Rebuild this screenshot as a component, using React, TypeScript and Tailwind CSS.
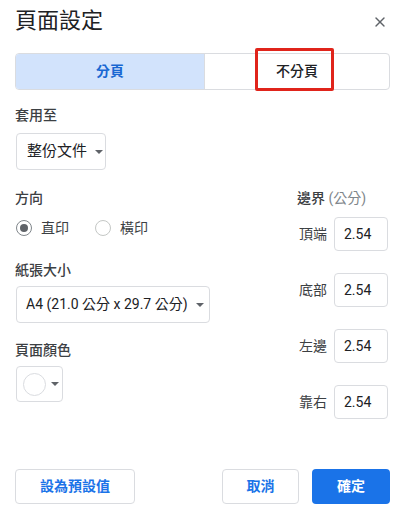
import { X } from 'lucide-react'

const font = { fontFamily: '"Roboto", "Noto Sans CJK TC", "Noto Sans", sans-serif' }

function Caret() {
  return <span className="inline-block w-0 h-0 border-l-[4px] border-r-[4px] border-t-[4px] border-l-transparent border-r-transparent border-t-[#5f6368]" />
}

function Radio({ checked, label }: { checked?: boolean; label: string }) {
  return (
    <div className="flex items-center gap-[9px]">
      <span
        className={`w-[16px] h-[16px] rounded-full border flex items-center justify-center ${
          checked ? 'border-[#80868b]' : 'border-[#c4c7c5]'
        }`}
      >
        {checked && <span className="w-[8px] h-[8px] rounded-full bg-[#5f6368]" />}
      </span>
      <span className="text-[14px] text-[#3c4043]">{label}</span>
    </div>
  )
}

function MarginInput({ label }: { label: string }) {
  return (
    <div className="flex items-center justify-end gap-[7px]">
      <span className="text-[14px] text-[#3c4043]">{label}</span>
      <div className="w-[54px] h-[34px] border border-[#dadce0] rounded-[4px] flex items-center pl-[9px] text-[14px] text-[#202124]">
        2.54
      </div>
    </div>
  )
}

export default function App() {
  return (
    <div className="w-[411px] h-[524px] bg-white pl-[15px] pr-[21px] pt-[7px] relative" style={font}>
      {/* Header */}
      <div className="flex items-center justify-between h-[28px]">
        <h1 className="text-[22px] leading-[28px] text-[#202124]">頁面設定</h1>
        <X className="w-[16px] h-[16px] text-[#5f6368] mr-[2px] mt-[2px]" strokeWidth={2} />
      </div>

      {/* Segmented */}
      <div className="mt-[18px] h-[37px] flex border border-[#dadce0] rounded-[4px] overflow-hidden">
        <div className="w-[188px] bg-[#d2e3fc] flex items-center justify-center text-[14px] font-bold text-[#1967d2]">
          分頁
        </div>
        <div className="flex-1 border-l border-[#dadce0] flex items-center justify-center text-[14px] font-medium text-[#202124]">
          不分頁
        </div>
      </div>
      {/* highlight annotation */}
      <div className="absolute left-[255px] top-[48px] w-[79px] h-[43px] border-[3px] border-[#e0241b] rounded-[2px]" />

      {/* Apply to */}
      <div className="mt-[15px] text-[14px] leading-[20px] font-medium text-[#3c4043]">套用至</div>
      <div className="mt-[8px] w-[90px] h-[37px] ml-[1px] border border-[#dadce0] rounded-[4px] flex items-center pl-[10px] gap-[8px] text-[15px] text-[#202124]">
        整份文件
        <Caret />
      </div>

      <div className="mt-[18px] flex">
        {/* Left */}
        <div className="flex-1">
          <div className="text-[14px] leading-[20px] font-medium text-[#3c4043]">方向</div>
          <div className="mt-[10px] h-[20px] flex items-center gap-[26px] pl-[1px]">
            <Radio checked label="直印" />
            <Radio label="橫印" />
          </div>

          <div className="mt-[22px] text-[14px] leading-[20px] font-medium text-[#3c4043]">紙張大小</div>
          <div className="mt-[6px] ml-[1px] w-[194px] h-[37px] border border-[#dadce0] rounded-[4px] flex items-center pl-[9px] gap-[8px] text-[14px] text-[#202124]">
            A4 (21.0 公分 x 29.7 公分)
            <Caret />
          </div>

          <div className="mt-[17px] text-[14px] leading-[20px] font-medium text-[#3c4043]">頁面顏色</div>
          <div className="mt-[6px] ml-[1px] w-[47px] h-[36px] border border-[#dadce0] rounded-[4px] flex items-center pl-[6px] gap-[5px]">
            <span className="w-[23px] h-[23px] rounded-full border border-[#dadce0] bg-white" />
            <Caret />
          </div>
        </div>

        {/* Right */}
        <div className="w-[93px] pr-[2px]">
          <div className="text-[14px] leading-[20px] font-medium text-[#3c4043]">
            邊界 <span className="font-normal text-[#80868b]">(公分)</span>
          </div>
          <div className="mt-[9px] flex flex-col gap-[22px]">
            <MarginInput label="頂端" />
            <MarginInput label="底部" />
            <MarginInput label="左邊" />
            <MarginInput label="靠右" />
          </div>
        </div>
      </div>

      {/* Footer */}
      <div className="mt-[50px] flex items-center">
        <button className="w-[120px] h-[35px] border border-[#dadce0] rounded-[4px] text-[14px] font-bold text-[#1a73e8]">
          設為預設值
        </button>
        <div className="flex-1" />
        <button className="w-[77px] h-[35px] border border-[#dadce0] rounded-[4px] text-[14px] font-bold text-[#1a73e8]">
          取消
        </button>
        <button className="ml-[13px] w-[78px] h-[35px] rounded-[4px] bg-[#1a73e8] text-[14px] font-bold text-white">
          確定
        </button>
      </div>
    </div>
  )
}
